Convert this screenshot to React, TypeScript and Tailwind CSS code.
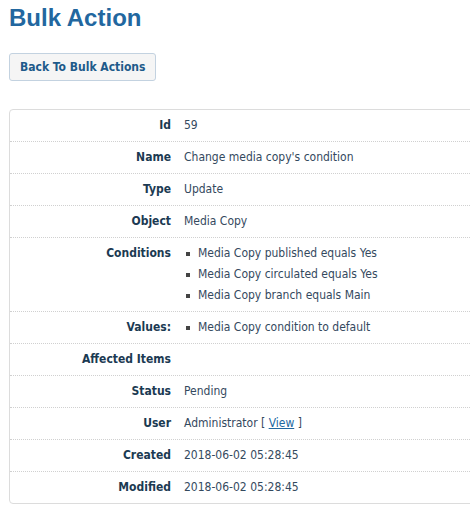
import React from 'react';

const rows: { label: string; value?: React.ReactNode; list?: string[] }[] = [
  { label: 'Id', value: '59' },
  { label: 'Name', value: "Change media copy's condition" },
  { label: 'Type', value: 'Update' },
  { label: 'Object', value: 'Media Copy' },
  {
    label: 'Conditions',
    list: ['Media Copy published equals Yes', 'Media Copy circulated equals Yes', 'Media Copy branch equals Main'],
  },
  { label: 'Values:', list: ['Media Copy condition to default'] },
  { label: 'Affected Items', value: '' },
  { label: 'Status', value: 'Pending' },
  {
    label: 'User',
    value: (
      <>
        Administrator [ <a href="#" className="text-[#22679f] underline">View</a> ]
      </>
    ),
  },
  { label: 'Created', value: '2018-06-02 05:28:45' },
  { label: 'Modified', value: '2018-06-02 05:28:45' },
];

const App = () => {
  return (
    <div
      className="w-[470px] h-[512px] overflow-hidden bg-white px-[9px] pt-[4px]"
      style={{ fontFamily: '"DejaVu Sans Condensed", "DejaVu Sans", sans-serif' }}
    >
      {/* Page title */}
      <h1 className="text-[24px] leading-[28px] font-bold text-[#22679f] font-['Liberation_Sans',Arial,sans-serif]">
        Bulk Action
      </h1>

      <button className="mt-[21px] h-[28px] px-[10px] bg-[#f5f5f5] border border-[#c3d2e0] rounded-[3px] text-[12px] font-bold text-[#1e5a8a]">
        Back To Bulk Actions
      </button>

      {/* Details panel */}
      <div className="mt-[28px] w-[480px] border border-[#dcdcdc] rounded-[4px] text-[12px] leading-[17px]">
        {rows.map((row, i) => (
          <div
            key={row.label}
            className={`flex py-[7px] ${i < rows.length - 1 ? 'border-b border-dotted border-[#d0d0d0]' : ''}`}
          >
            <div className="w-[161px] shrink-0 text-right font-bold text-[#1b3a52]">{row.label}</div>
            <div className="pl-[13px] text-[#34495e]">
              {row.list ? (
                <ul className="flex flex-col gap-[4px]">
                  {row.list.map((item) => (
                    <li key={item} className="flex items-center">
                      <span className="w-[4px] h-[4px] bg-[#444] ml-[2px] mr-[8px]" />
                      {item}
                    </li>
                  ))}
                </ul>
              ) : (
                row.value
              )}
            </div>
          </div>
        ))}
      </div>
    </div>
  );
};

export default App;
